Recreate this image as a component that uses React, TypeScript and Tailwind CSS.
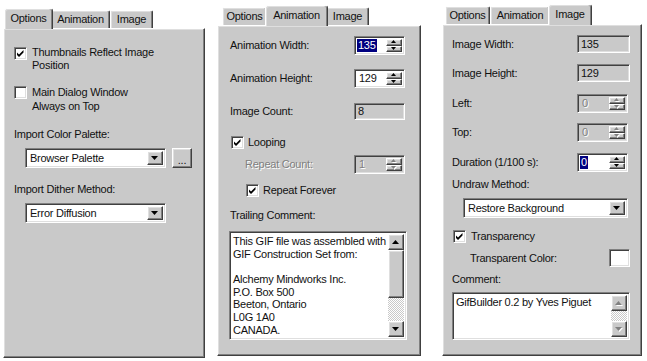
import type {ReactNode} from 'react'

const raised =
    'border border-t-white border-l-white border-r-[#404040] border-b-[#404040] shadow-[inset_-1px_-1px_0_#808080,inset_1px_1px_0_#dfdfdf]'
const sunken =
    'border border-t-[#808080] border-l-[#808080] border-r-white border-b-white shadow-[inset_1px_1px_0_#404040,inset_-1px_-1px_0_#dfdfdf]'
const disabledText = 'text-[#808080] [text-shadow:1px_1px_0_#ffffff]'

function Tab({label, className, active}: {label: string; className: string; active?: boolean}) {
    if (active) {
        return (
            <div
                className={`relative z-10 -mx-[2px] h-[21px] flex justify-center pt-[3px] bg-[#c9c9c9] border-t border-l border-r border-t-white border-l-white border-r-[#404040] rounded-t-[3px] shadow-[inset_-1px_0_0_#808080,inset_1px_1px_0_#dfdfdf] ${className}`}
            >
                {label}
            </div>
        )
    }
    return (
        <div
            className={`h-[18px] mb-[1px] flex justify-center pt-[2px] bg-[#c9c9c9] border-t border-l border-r border-t-white border-l-white border-r-[#404040] rounded-t-[2px] shadow-[inset_-1px_0_0_#808080,inset_1px_1px_0_#dfdfdf] ${className}`}
        >
            {label}
        </div>
    )
}

function Arrow({dir = 'down', small, disabled}: {dir?: 'up' | 'down'; small?: boolean; disabled?: boolean}) {
    const w = small ? 5 : 7
    const h = small ? 3 : 4
    const pts = dir === 'down' ? `0,0 ${w},0 ${w / 2},${h}` : `0,${h} ${w},${h} ${w / 2},0`
    return (
        <svg width={w + 1} height={h + 1} viewBox={`0 0 ${w + 1} ${h + 1}`}>
            {disabled && <polygon points={pts} fill="#ffffff" transform="translate(1,1)"/>}
            <polygon points={pts} fill={disabled ? '#808080' : '#000000'}/>
        </svg>
    )
}

function Checkbox({className = '', checked = true}: {className?: string; checked?: boolean}) {
    return (
        <div className={`${sunken} bg-white w-[13px] h-[13px] shrink-0 relative ${className}`}>
            {checked && (
                <svg width="13" height="13" viewBox="0 0 13 13" className="absolute -left-[1px] -top-[1px]">
                    <path d="M3 5.5 L5 7.5 L9.5 3 L9.5 5.5 L5 10 L3 8 Z" fill="#000"/>
                </svg>
            )}
        </div>
    )
}

function Combo({value, className}: {value: string; className: string}) {
    return (
        <div className={`${sunken} bg-white h-[20px] flex items-center p-[2px] ${className}`}>
            <span className="flex-1 pl-[2px]">{value}</span>
            <div className={`${raised} bg-[#c9c9c9] w-[16px] h-full flex items-center justify-center`}>
                <Arrow/>
            </div>
        </div>
    )
}

function Spin({value, selected, disabled, className = 'h-[19px]'}: {
    value: string
    selected?: boolean
    disabled?: boolean
    className?: string
}) {
    return (
        <div className={`${sunken} ${disabled ? 'bg-[#c9c9c9]' : 'bg-white'} w-[51px] flex p-[2px] ${className}`}>
            <div className="flex-1 flex items-stretch">
                <span
                    className={
                        selected
                            ? 'bg-[#000080] text-white px-[1px] flex items-center'
                            : `pl-[2px] flex items-center ${disabled ? disabledText : ''}`
                    }
                >
                    {value}
                </span>
            </div>
            <div className="w-[16px] flex flex-col">
                <div className={`${raised} bg-[#c9c9c9] flex-1 flex items-center justify-center`}>
                    <Arrow dir="up" small disabled={disabled}/>
                </div>
                <div className={`${raised} bg-[#c9c9c9] flex-1 flex items-center justify-center`}>
                    <Arrow small disabled={disabled}/>
                </div>
            </div>
        </div>
    )
}

function Field({value, className}: {value: string; className: string}) {
    return (
        <div className={`${sunken} bg-[#c9c9c9] w-[53px] flex items-center pl-[3px] ${className}`}>
            {value}
        </div>
    )
}

function TextBox({lines, className, thumb}: {lines: string[]; className: string; thumb?: boolean}) {
    return (
        <div className={`${sunken} bg-white flex p-[2px] ${className}`}>
            <div className="flex-1 pl-[1px] pt-[1px] whitespace-pre">
                {lines.map((l, i) => (
                    <div key={i} className="h-[12.7px] leading-[12.7px]">{l || ' '}</div>
                ))}
            </div>
            <div className="w-[16px] flex flex-col">
                <div className={`${raised} bg-[#c9c9c9] h-[16px] flex items-center justify-center`}>
                    <Arrow dir="up" disabled={!thumb}/>
                </div>
                <div className="flex-1 flex flex-col bg-[image:repeating-conic-gradient(#ffffff_0%_25%,#c9c9c9_0%_50%)] bg-[length:2px_2px]">
                    {thumb && <div className={`${raised} bg-[#c9c9c9] h-[48px]`}/>}
                </div>
                <div className={`${raised} bg-[#c9c9c9] h-[16px] flex items-center justify-center`}>
                    <Arrow disabled={!thumb}/>
                </div>
            </div>
        </div>
    )
}

function Body({className, children}: {className: string; children: ReactNode}) {
    return (
        <div
            className={`bg-[#c9c9c9] border border-t-white border-l-white border-r-[#404040] border-b-[#404040] shadow-[inset_-1px_-1px_0_#808080,inset_1px_1px_0_#dfdfdf] flex flex-col ${className}`}
        >
            {children}
        </div>
    )
}

function OptionsPanel() {
    return (
        <div className="ml-[3px] mt-[8px] w-[202px] flex flex-col">
            <div className="relative z-10 flex items-end h-[21px] -mb-[1px] pl-[3px]">
                <Tab label="Options" className="w-[49px]" active/>
                <Tab label="Animation" className="w-[59px]"/>
                <Tab label="Image" className="w-[43px]"/>
            </div>
            <Body className="h-[330px] pl-[10px]">
                <div className="mt-[17px] flex items-start">
                    <Checkbox className="mt-[1px]"/>
                    <div className="ml-[5px] leading-[13px]">Thumbnails Reflect Image<br/>Position</div>
                </div>
                <div className="mt-[13px] flex items-start">
                    <Checkbox className="mt-[1px]" checked={false}/>
                    <div className="ml-[5px] leading-[14px]">Main Dialog Window<br/>Always on Top</div>
                </div>
                <div className="mt-[15px]">Import Color Palette:</div>
                <div className="mt-[7px] ml-[11px] flex gap-[6px]">
                    <Combo value="Browser Palette" className="w-[141px]"/>
                    <div className={`${raised} bg-[#c9c9c9] w-[20px] h-[20px] flex items-end justify-center pb-[3px] leading-[8px]`}>...</div>
                </div>
                <div className="mt-[15px]">Import Dither Method:</div>
                <Combo value="Error Diffusion" className="mt-[7px] ml-[11px] w-[141px]"/>
            </Body>
        </div>
    )
}

function AnimationPanel() {
    return (
        <div className="ml-[12px] mt-[5px] w-[204px] flex flex-col">
            <div className="relative z-10 flex items-end h-[21px] -mb-[1px] pl-[5px]">
                <Tab label="Options" className="w-[45px]"/>
                <Tab label="Animation" className="w-[63px]" active/>
                <Tab label="Image" className="w-[43px]"/>
            </div>
            <Body className="h-[331px] pl-[12px]">
                <div className="mt-[10px] flex items-center">
                    <span className="w-[124px]">Animation Width:</span>
                    <Spin value="135" selected/>
                </div>
                <div className="mt-[14px] flex items-center">
                    <span className="w-[124px]">Animation Height:</span>
                    <Spin value="129"/>
                </div>
                <div className="mt-[15px] flex items-center">
                    <span className="w-[124px]">Image Count:</span>
                    <div className={`${sunken} bg-[#c9c9c9] w-[51px] h-[17px] flex items-center pl-[3px]`}>8</div>
                </div>
                <div className="mt-[16px] ml-[1px] flex items-center">
                    <Checkbox/>
                    <span className="ml-[4px]">Looping</span>
                </div>
                <div className="mt-[6px] flex items-center">
                    <span className={`w-[124px] pl-[15px] ${disabledText}`}>Repeat Count:</span>
                    <Spin value="1" disabled/>
                </div>
                <div className="mt-[10px] ml-[16px] flex items-center">
                    <Checkbox/>
                    <span className="ml-[4px]">Repeat Forever</span>
                </div>
                <div className="mt-[12px]">Trailing Comment:</div>
                <TextBox
                    className="mt-[9px] -ml-[1px] w-[178px] h-[109px]"
                    thumb
                    lines={[
                        'This GIF file was assembled with',
                        'GIF Construction Set from:',
                        '',
                        'Alchemy Mindworks Inc.',
                        'P.O. Box 500',
                        'Beeton, Ontario',
                        'L0G 1A0',
                        'CANADA.',
                    ]}
                />
            </Body>
        </div>
    )
}

function ImagePanel() {
    return (
        <div className="ml-[21px] mt-[4px] w-[200px] flex flex-col">
            <div className="relative z-10 flex items-end h-[21px] -mb-[1px] pl-[3px]">
                <Tab label="Options" className="w-[45px]"/>
                <Tab label="Animation" className="w-[60px]"/>
                <Tab label="Image" className="w-[44px]" active/>
            </div>
            <Body className="h-[332px] pl-[9px]">
                <div className="mt-[10px] flex items-center">
                    <span className="w-[125px]">Image Width:</span>
                    <Field value="135" className="h-[18px]"/>
                </div>
                <div className="mt-[11px] flex items-center">
                    <span className="w-[125px]">Image Height:</span>
                    <Field value="129" className="h-[18px]"/>
                </div>
                <div className="mt-[12px] flex items-center">
                    <span className="w-[125px]">Left:</span>
                    <Spin value="0" disabled/>
                </div>
                <div className="mt-[10px] flex items-center">
                    <span className="w-[125px]">Top:</span>
                    <Spin value="0" disabled/>
                </div>
                <div className="mt-[11px] flex items-center">
                    <span className="w-[125px]">Duration (1/100 s):</span>
                    <Spin value="0" selected/>
                </div>
                <div className="mt-[6px]">Undraw Method:</div>
                <Combo value="Restore Background" className="mt-[7px] ml-[11px] w-[165px]"/>
                <div className="mt-[12px] ml-[1px] flex items-center">
                    <Checkbox/>
                    <span className="ml-[5px]">Transparency</span>
                </div>
                <div className="mt-[6px] flex items-center h-[18px]">
                    <span className="w-[157px] pl-[18px]">Transparent Color:</span>
                    <div className={`${sunken} bg-white w-[21px] h-[18px]`}/>
                </div>
                <div className="mt-[6px]">Comment:</div>
                <TextBox
                    className="mt-[6px] w-[178px] h-[48px]"
                    lines={['GifBuilder 0.2 by Yves Piguet']}
                />
            </Body>
        </div>
    )
}

export default function App() {
    return (
        <div
            className="w-[647px] h-[361px] overflow-hidden bg-white flex items-start font-['Liberation_Sans',Arial,sans-serif] text-[11px] leading-[13px] tracking-[-0.25px] text-[#111]"
        >
            <OptionsPanel/>
            <AnimationPanel/>
            <ImagePanel/>
        </div>
    )
}
